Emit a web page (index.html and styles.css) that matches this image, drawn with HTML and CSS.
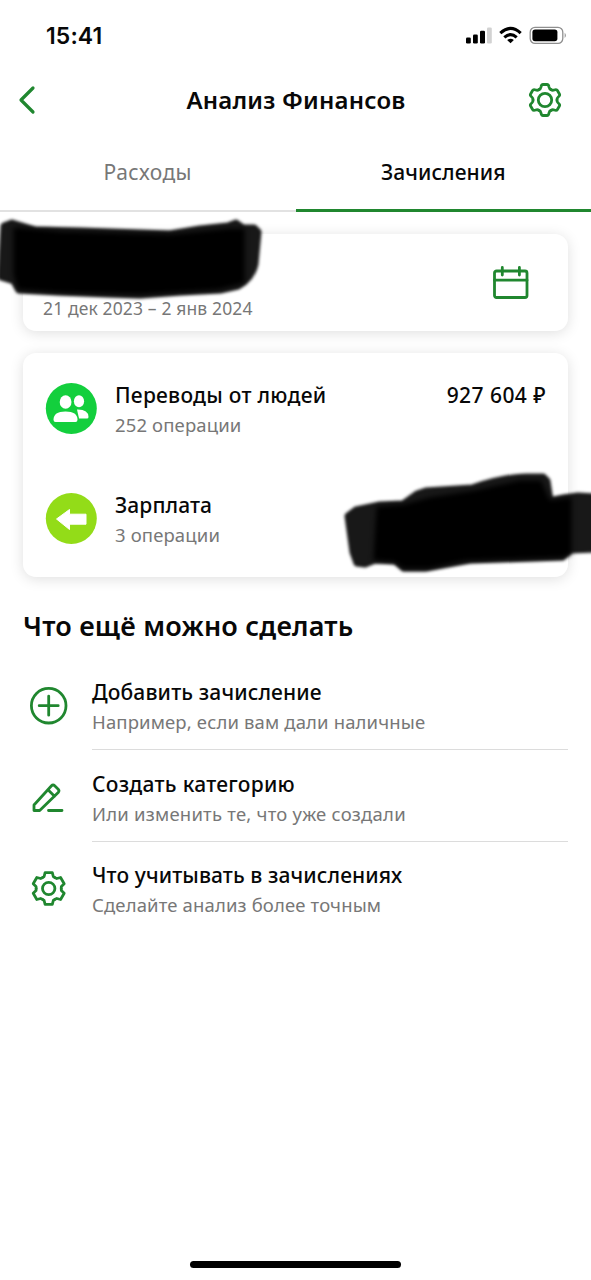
FILE: index.html
```html
<!DOCTYPE html>
<html lang="ru">
<head>
<meta charset="utf-8">
<title>Анализ Финансов</title>
<link rel="stylesheet" href="styles.css">
</head>
<body>
<svg class="defs" width="0" height="0" aria-hidden="true">
  <defs>
    <path id="tooth" d="M-6-10.4Q-4.4-11-4-13Q-3.6-15.5-2-15.5H2Q3.6-15.5 4-13Q4.4-11 6-10.4"/>
    <g id="gear">
      <use href="#tooth"/><use href="#tooth" transform="rotate(60)"/><use href="#tooth" transform="rotate(120)"/>
      <use href="#tooth" transform="rotate(180)"/><use href="#tooth" transform="rotate(240)"/><use href="#tooth" transform="rotate(300)"/>
      <circle r="6.7"/>
    </g>
    <path id="tooth-flat" d="M-6.2-10.9L-4.6-12L-3.6-15.8H3.6L4.6-12L6.2-10.9"/>
    <g id="gear-flat">
      <use href="#tooth-flat"/><use href="#tooth-flat" transform="rotate(60)"/><use href="#tooth-flat" transform="rotate(120)"/>
      <use href="#tooth-flat" transform="rotate(180)"/><use href="#tooth-flat" transform="rotate(240)"/><use href="#tooth-flat" transform="rotate(300)"/>
      <circle r="6.2"/>
    </g>
  </defs>
</svg>
<div class="screen">
  <div class="status">
    <span class="time">15:41</span>
    <svg class="status-icons" width="102" height="20" viewBox="0 0 102 20">
      <rect x="1" y="11.5" width="4.8" height="6" rx="1.3"/>
      <rect x="8" y="8.5" width="4.8" height="9" rx="1.3"/>
      <rect x="15" y="4.8" width="5" height="12.7" rx="1.3"/>
      <rect x="22" y="1.5" width="4.8" height="16" rx="1.3" fill="#d2d2d2"/>
      <g fill="none" stroke="#000" stroke-width="3.1">
        <path d="M35.3 7.1Q45.500-2.200 55.700 7.100"/>
        <path d="M39.300 11.300Q45.500 5.900 51.700 11.300"/>
      </g>
      <path d="M45.500 17.300L42.100 13.900Q45.500 11.400 48.900 13.900Z"/>
      <rect x="65.200" y="1.400" width="32.600" height="16" rx="4.800" fill="none" stroke="#8f8f8f" stroke-width="1.300"/>
      <rect x="67.400" y="3.600" width="25" height="11.700" rx="2.700"/>
      <path d="M99.700 6.700Q102 9.400 99.700 12.100Z" fill="#8f8f8f"/>
    </svg>
  </div>
  <header class="nav">
    <svg class="back" width="20" height="30" viewBox="0 0 20 30"><path d="M16 3L4 15L16 27"/></svg>
    <h1 class="title">Анализ Финансов</h1>
    <svg class="line-icon" width="36" height="36" viewBox="-18 -18 36 36"><use href="#gear"/></svg>
  </header>
  <nav class="tabs">
    <div class="tab"><span class="tab-a">Расходы</span></div>
    <div class="tab tab-active"><span class="tab-b">Зачисления</span></div>
  </nav>
  <main class="content">
    <section class="card period">
      <span class="dates">21 дек 2023 – 2 янв 2024</span>
      <svg class="line-icon calendar" width="38" height="34" viewBox="0 0 38 34">
        <rect x="2.500" y="5" width="32.500" height="26.500" rx="2"/>
        <path d="M2.500 14.200H35M10.300 1.500V9M27.400 1.500V9"/>
      </svg>
      <svg class="scribble scribble-a" width="280" height="100" viewBox="0 0 280 100">
        <path class="soft" d="M4 16L12 13L35 20L80 21L170 24L200 19L228 16L236 13L243 18L254 18L258 22L255 54Q252 68 238 76L220 80L180 82L140 85L110 84L60 82L19 80L14 71L1 67Z"/>
        <path class="core" d="M15 19L60 23L170 26L230 20L243 20L243 72L218 78L140 83L60 81L19 78L15 64Z"/>
      </svg>
    </section>
    <section class="card sums">
      <article class="sum">
        <svg class="badge" width="52" height="52" viewBox="0 0 52 52">
          <circle cx="26.300" cy="25.500" r="25.500" fill="#13cf3d"/>
          <g fill="#fff">
            <ellipse cx="34" cy="18.300" rx="5.100" ry="6"/>
            <path d="M32 26.500Q43.500 26.200 43.500 34Q43.500 35.500 42 35.500H34Z"/>
            <g stroke="#13cf3d" stroke-width="2.200" paint-order="stroke">
              <ellipse cx="20.600" cy="19" rx="5.900" ry="6.700"/>
              <path d="M8.500 36.800Q8.500 28.500 20.500 28.500T32.500 36.800Q32.500 39 30.500 39H10.500Q8.500 39 8.500 36.800Z"/>
            </g>
          </g>
        </svg>
        <div class="text"><div class="name n1">Переводы от людей</div><div class="note s1">252 операции</div></div>
        <div class="amount">927 604 ₽</div>
      </article>
      <article class="sum">
        <svg class="badge" width="52" height="52" viewBox="0 0 52 52">
          <circle cx="26.300" cy="25.500" r="25.500" fill="#93dc18"/>
          <path d="M11.500 26L24.500 16.500V21.200H41V31.200H24.500V36.500Z" fill="#fff" stroke="#fff" stroke-width="1" stroke-linejoin="round"/>
        </svg>
        <div class="text"><div class="name n2">Зарплата</div><div class="note s2">3 операции</div></div>
      </article>
      <svg class="scribble scribble-b" width="261" height="110" viewBox="0 0 261 110">
        <path class="soft" d="M18 46L26 40L50 35L73 34L87 24L96 21L142 18Q178 6 200 7L213 7L217 11L220 31L234 28L248 26L265 27V79L240 80L232 87L140 90L95 98L74 98L66 91L45 90L35 94L27 93L23 82Z"/>
        <path class="core" d="M48 38L74 36L100 29L145 22L190 12L210 12L219 32L240 29V83L232 86L135 89L98 97L74 97L64 90L45 89Z"/>
      </svg>
    </section>
    <h2 class="heading">Что ещё можно сделать</h2>
    <ul class="actions">
      <li class="action">
        <svg class="line-icon" width="40" height="40" viewBox="0 0 40 40"><circle cx="19.700" cy="19.700" r="17.300"/><path d="M19.700 10.200V29.200M10.200 19.700H29.200"/></svg>
        <div class="text"><div class="name n3">Добавить зачисление</div><div class="note s3">Например, если вам дали наличные</div></div>
      </li>
      <li class="action">
        <svg class="line-icon" width="40" height="40" viewBox="0 0 40 40"><path d="M5 32.500V27L22.500 7.800Q24 6.200 25.700 7.800L29.200 11.200Q30.700 12.800 29.200 14.500L10.700 32.500ZM19 11.800L25.500 18.200M19.500 32.500H33"/></svg>
        <div class="text"><div class="name n4">Создать категорию</div><div class="note s4">Или изменить те, что уже создали</div></div>
      </li>
      <li class="action">
        <svg class="line-icon" width="40" height="40" viewBox="-19.700 -19.500 40 40"><use href="#gear-flat"/></svg>
        <div class="text"><div class="name n5">Что учитывать в зачислениях</div><div class="note s5">Сделайте анализ более точным</div></div>
      </li>
    </ul>
  </main>
  <footer class="home"><div class="home-bar"></div></footer>
</div>
</body>
</html>
```
FILE: styles.css
```css
* { box-sizing: border-box; }
body { margin: 0; background: #fff; font-family: "Noto Sans", "Open Sans", sans-serif; color: #080808; }
h1, h2, ul { margin: 0; padding: 0; }
.defs { display: block; height: 0; }
.screen { width: 591px; height: 1280px; display: flex; flex-direction: column; overflow: hidden; }
.status { height: 70px; padding: 1px 24px 0 46px; display: flex; align-items: center; justify-content: space-between; }
.time { font: 600 23px/30px Inter, sans-serif; letter-spacing: 0.1px; }
.status-icons { display: block; }
.nav { height: 60px; padding: 0 28px 0 17px; display: grid; grid-template-columns: 48px 1fr 36px; align-items: center; }
.title { text-align: center; font-size: 24px; line-height: 30px; font-weight: 600; letter-spacing: .2px; white-space: nowrap; }
.back, .line-icon { display: block; fill: none; stroke: #20872f; stroke-width: 2.8; stroke-linejoin: round; stroke-linecap: round; }
.back { stroke-width: 3.2; }
.tabs { height: 82px; display: grid; grid-template-columns: 1fr 1fr; font-size: 21px; }
.tab { display: flex; justify-content: center; padding-top: 27px; line-height: 30px; color: #777; border-bottom: 2px solid #e2e2e2; height: 82px; }
.tab-active { color: #080808; border-bottom: 3px solid #20872f; font-weight: 500; }
.tab-a { letter-spacing: .4px; }
.tab-b { letter-spacing: .06px; }
.content { padding: 22px 23px 0; flex: 1; }
.card { position: relative; background: #fff; border-radius: 13px; box-shadow: 0 2px 14px rgba(0,0,0,.13); }
.period { height: 97px; display: flex; align-items: center; justify-content: space-between; padding: 0 38px 0 20px; }
.dates { align-self: flex-end; font-size: 17.5px; line-height: 24px; letter-spacing: .13px; color: #777; margin-bottom: 11px; white-space: nowrap; }
.scribble { position: absolute; overflow: visible; z-index: 1; }
.scribble .soft { fill: #181818; stroke: #181818; stroke-width: 7; stroke-linejoin: round; filter: blur(1.4px); }
.scribble .core { fill: #000; stroke: #000; stroke-width: 3; stroke-linejoin: round; filter: blur(2.4px); }
.scribble-a { left: -23px; top: -24px; }
.scribble-b { left: 307px; top: 117px; }
.sums { margin-top: 22px; height: 224px; padding: 27px 22px 0; display: flex; flex-direction: column; gap: 50px; }
.sum { height: 60px; display: flex; align-items: flex-start; }
.badge { display: block; margin: 3px 18px 0 0; }
.text { flex: 1; white-space: nowrap; }
.name { font-size: 21px; line-height: 30px; font-weight: 500; }
.note { font-size: 18.5px; line-height: 30px; color: #777; letter-spacing: .14px; }
.n1 { letter-spacing: .26px; }
.n2 { letter-spacing: .1px; }
.n3 { letter-spacing: .14px; }
.n4 { letter-spacing: .28px; }
.n5 { letter-spacing: .1px; }
.s4 { letter-spacing: .22px; }
.amount { font-size: 21px; line-height: 30px; font-weight: 500; letter-spacing: .45px; white-space: nowrap; }
.heading { margin-top: 31px; font-size: 27px; line-height: 36px; font-weight: 600; letter-spacing: .2px; white-space: nowrap; }
.actions { list-style: none; margin-top: 33px; }
.action { height: 91.5px; display: flex; align-items: flex-start; padding-left: 6px; }
.action .line-icon { margin: 9px 23px 0 0; }
.action .text { height: 73px; border-bottom: 1.5px solid #dcdcdc; }
.action:last-child .text { border: 0; }
.home { height: 22px; display: flex; justify-content: center; }
.home-bar { width: 211px; height: 7px; margin-top: 3px; border-radius: 4px; background: #000; }
```
